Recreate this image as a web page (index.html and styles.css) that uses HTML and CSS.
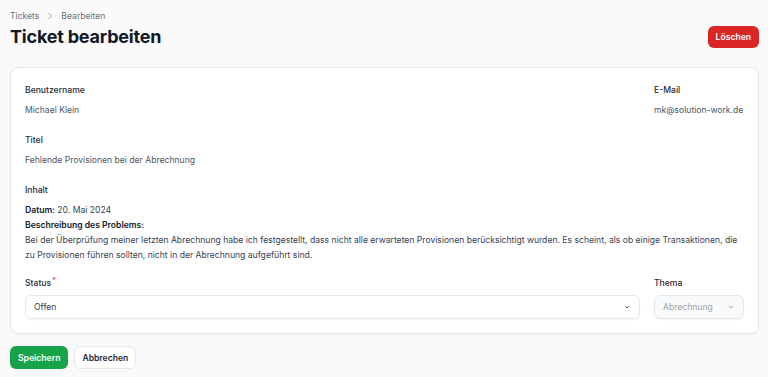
FILE: index.html
```html
<!DOCTYPE html>
<html>
  <head>
    <meta charset="utf-8">
    <meta name="viewport" content="width=device-width,initial-scale=1">
    <title>Ticket bearbeiten</title>
    <link rel="stylesheet" href="styles.css">
  </head>
  <body>
    <nav class="breadcrumb">
      <span>Tickets</span>
      <svg class="breadcrumb-sep" viewBox="0 0 10 10"><path d="M3.5 2 L6.5 5 L3.5 8"/></svg>
      <span>Bearbeiten</span>
    </nav>
    <header class="page-header">
      <h1 class="page-title">Ticket bearbeiten</h1>
      <button class="btn btn-danger">Löschen</button>
    </header>
    <form class="card">
      <div class="row">
        <div class="field">
          <div class="field-label">Benutzername</div>
          <div class="field-value">Michael Klein</div>
        </div>
        <div class="field">
          <div class="field-label">E-Mail</div>
          <div class="field-value">mk@solution-work.de</div>
        </div>
      </div>
      <div class="field">
        <div class="field-label">Titel</div>
        <div class="field-value">Fehlende Provisionen bei der Abrechnung</div>
      </div>
      <div class="field">
        <div class="field-label">Inhalt</div>
        <div class="field-content">
          <p><strong>Datum:</strong> 20. Mai 2024</p>
          <p><strong>Beschreibung des Problems:</strong></p>
          <p>Bei der Überprüfung meiner letzten Abrechnung habe ich festgestellt, dass nicht alle erwarteten Provisionen berücksichtigt wurden. Es scheint, als ob einige Transaktionen, die zu Provisionen führen sollten, nicht in der Abrechnung aufgeführt sind.</p>
        </div>
      </div>
      <div class="row row-selects">
        <div class="field field-select">
          <div class="field-label">Status<sup class="required">*</sup></div>
          <div class="select">
            <span>Offen</span>
            <svg class="chevron" viewBox="0 0 10 10"><path d="M3 4 L5 6 L7 4"/></svg>
          </div>
        </div>
        <div class="field field-select">
          <div class="field-label">Thema</div>
          <div class="select select-disabled">
            <span>Abrechnung</span>
            <svg class="chevron" viewBox="0 0 10 10"><path d="M3 4 L5 6 L7 4"/></svg>
          </div>
        </div>
      </div>
    </form>
    <div class="actions">
      <button class="btn btn-primary">Speichern</button>
      <button class="btn btn-secondary">Abbrechen</button>
    </div>
  </body>
</html>
```

FILE: styles.css
```css
* {
  box-sizing: border-box;
  margin: 0;
  padding: 0;
}

body {
  background-color: #fafafa;
  color: #1f2937;
  font-family: Inter, "Noto Sans", sans-serif;
  font-size: 8.6px;
  padding: 9px 9px 0 10px;
}

.breadcrumb {
  align-items: center;
  color: #6b7280;
  display: flex;
  gap: 6px;
  height: 13px;
}

.breadcrumb-sep {
  fill: none;
  height: 10px;
  stroke: #9ca3af;
  stroke-width: 1;
  width: 10px;
}

.page-header {
  align-items: center;
  display: flex;
  justify-content: space-between;
  margin-top: 2px;
}

.page-title {
  color: #111827;
  font-size: 18px;
  font-weight: 700;
  letter-spacing: -0.2px;
  line-height: 26px;
}

.btn {
  border: none;
  border-radius: 6px;
  font-family: inherit;
  font-size: 8.6px;
  font-weight: 600;
  height: 22px;
  padding: 0 8px;
}

.btn-danger {
  background-color: #dc2626;
  color: #fff;
}

.btn-primary {
  background-color: #16a34a;
  color: #fff;
  height: 23px;
}

.btn-secondary {
  background-color: #fff;
  border: 1px solid #e5e7eb;
  color: #1f2937;
  height: 23px;
  padding: 0 7px;
}

.card {
  background-color: #fff;
  border: 1px solid #e5e7eb;
  border-radius: 8px;
  box-shadow: 0 1px 2px rgba(0, 0, 0, 0.04);
  display: flex;
  flex-direction: column;
  gap: 17px;
  margin-top: 17px;
  padding: 16px 14px 14px;
}

.row {
  display: grid;
  gap: 14px;
  grid-template-columns: 1fr 90px;
}

.row-selects {
  margin-top: -3px;
}

.field {
  display: flex;
  flex-direction: column;
  gap: 7px;
}

.field-select {
  gap: 5px;
}

.field-label {
  color: #1f2937;
  font-weight: 500;
  line-height: 13px;
}

.required {
  color: #dc2626;
  font-size: 7px;
  line-height: 7px;
  margin-left: 1px;
  vertical-align: top;
}

.field-value {
  color: #4b5563;
  line-height: 13px;
  white-space: nowrap;
}

.field-content {
  color: #374151;
  line-height: 15px;
  margin-top: -1px;
}

.field-content strong {
  color: #111827;
  font-weight: 600;
}

.select {
  align-items: center;
  background-color: #fff;
  border: 1px solid #e5e7eb;
  border-radius: 6px;
  box-shadow: 0 1px 2px rgba(0, 0, 0, 0.04);
  color: #374151;
  display: flex;
  height: 24px;
  justify-content: space-between;
  padding: 0 7px 0 8px;
}

.select-disabled {
  background-color: #f9fafb;
  color: #9ca3af;
}

.chevron {
  fill: none;
  height: 10px;
  stroke: #6b7280;
  stroke-width: 1;
  width: 10px;
}

.select-disabled .chevron {
  stroke: #9ca3af;
}

.actions {
  display: flex;
  gap: 6px;
  margin-top: 12px;
}
```
